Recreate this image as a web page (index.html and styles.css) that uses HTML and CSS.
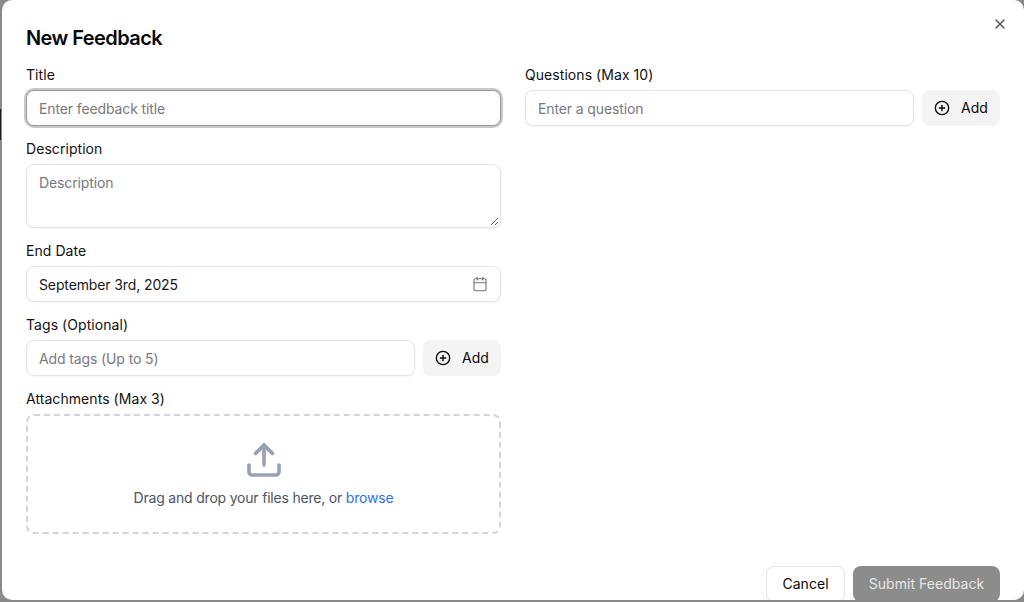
FILE: index.html
```html
<!DOCTYPE html>
<html lang="en">
<head>
<meta charset="utf-8">
<title>New Feedback</title>
<link rel="stylesheet" href="styles.css">
</head>
<body>
<div class="backdrop-mark"></div>
<div class="modal">
  <button class="close" type="button" aria-label="Close">
    <svg width="16" height="16" viewBox="0 0 24 24" fill="none" stroke="currentColor" stroke-width="2" stroke-linecap="round" stroke-linejoin="round"><path d="M18 6 6 18"/><path d="m6 6 12 12"/></svg>
  </button>
  <h2 class="heading">New Feedback</h2>
  <div class="columns">
    <div class="col">
      <div class="field">
        <label class="label">Title</label>
        <div class="input focus"><span class="ph">Enter feedback title</span></div>
      </div>
      <div class="field">
        <label class="label">Description</label>
        <div class="input area"><span class="ph">Description</span>
          <svg class="grip" width="9" height="9" viewBox="0 0 9 9" fill="none" stroke="#555" stroke-width="0.9"><path d="M1 8 8 1"/><path d="M5 8 8 5"/></svg>
        </div>
      </div>
      <div class="field">
        <label class="label">End Date</label>
        <div class="input date"><span class="val">September 3rd, 2025</span>
          <svg width="16" height="16" viewBox="0 0 24 24" fill="none" stroke="#71717a" stroke-width="1.6" stroke-linecap="round" stroke-linejoin="round"><path d="M8 2v4"/><path d="M16 2v4"/><rect x="3" y="4" width="18" height="18" rx="2"/><path d="M3 10h18"/></svg>
        </div>
      </div>
      <div class="field">
        <label class="label">Tags (Optional)</label>
        <div class="row">
          <div class="input grow"><span class="ph">Add tags (Up to 5)</span></div>
          <button class="add" type="button">
            <svg width="16" height="16" viewBox="0 0 24 24" fill="none" stroke="currentColor" stroke-width="2" stroke-linecap="round" stroke-linejoin="round"><circle cx="12" cy="12" r="10"/><path d="M8 12h8"/><path d="M12 8v8"/></svg>
            Add
          </button>
        </div>
      </div>
      <div class="field">
        <label class="label">Attachments (Max 3)</label>
        <div class="drop">
          <svg width="40" height="40" viewBox="0 0 24 24" fill="none" stroke="#98a2b3" stroke-width="2.2" stroke-linecap="round" stroke-linejoin="round"><path d="M21 15v4a2 2 0 0 1-2 2H5a2 2 0 0 1-2-2v-4"/><polyline points="17 8 12 3 7 8"/><line x1="12" y1="3" x2="12" y2="15"/></svg>
          <p class="drop-text">Drag and drop your files here, or <span class="browse">browse</span></p>
        </div>
      </div>
    </div>
    <div class="col">
      <div class="field">
        <label class="label">Questions (Max 10)</label>
        <div class="row">
          <div class="input grow"><span class="ph">Enter a question</span></div>
          <button class="add" type="button">
            <svg width="16" height="16" viewBox="0 0 24 24" fill="none" stroke="currentColor" stroke-width="2" stroke-linecap="round" stroke-linejoin="round"><circle cx="12" cy="12" r="10"/><path d="M8 12h8"/><path d="M12 8v8"/></svg>
            Add
          </button>
        </div>
      </div>
    </div>
  </div>
  <div class="footer">
    <button class="btn cancel" type="button">Cancel</button>
    <button class="btn submit" type="button">Submit Feedback</button>
  </div>
</div>
</body>
</html>
```
FILE: styles.css
```css
* { box-sizing: border-box; }
html, body { margin: 0; height: 100%; }
body {
  background: #8a8a8a;
  font-family: Inter, "Liberation Sans", sans-serif;
  color: #09090b;
  overflow: hidden;
  padding-left: 2px;
}
.backdrop-mark {
  position: absolute;
  left: 0;
  top: 109px;
  width: 1px;
  height: 31px;
  background: #1c1c1c;
}
.modal {
  position: relative;
  background: #fff;
  width: 1022px;
  height: 600px;
  border-radius: 10px;
  padding: 28px 24px 0;
  overflow: hidden;
}
.close {
  position: absolute;
  top: 16px;
  right: 16px;
  padding: 0;
  border: 0;
  background: none;
  color: #52525b;
  display: flex;
}
.heading {
  margin: 0 0 17px;
  font-size: 20px;
  line-height: 20px;
  font-weight: 600;
  letter-spacing: -0.57px;
}
.columns {
  display: grid;
  grid-template-columns: 1fr 1fr;
  gap: 24px;
}
.col { display: flex; flex-direction: column; gap: 13px; min-width: 0; }
.field { display: flex; flex-direction: column; gap: 5px; }
.label { font-size: 14px; line-height: 20px; font-weight: 400; height: 20px; letter-spacing: 0.06px; color: #111113; }
.input {
  height: 36px;
  border: 1px solid #e4e4e7;
  border-radius: 8px;
  background: #fff;
  padding: 0 12px;
  display: flex;
  align-items: center;
  font-size: 14px;
  letter-spacing: -0.12px;
  box-shadow: 0 1px 2px rgba(0,0,0,.05);
}
.input.focus {
  border-color: #9a9a9a;
  box-shadow: 0 0 0 2px #c8c8c8;
}
.ph { color: #787880; }
.val { color: #18181b; }
.area { height: 64px; align-items: flex-start; padding-top: 8px; position: relative; line-height: 20px; }
.grip { position: absolute; right: 1px; bottom: 1px; }
.date { justify-content: space-between; }
.row { display: flex; gap: 8px; }
.grow { flex: 1; min-width: 0; }
.add {
  height: 36px;
  width: 78px;
  border: 0;
  border-radius: 8px;
  background: #f4f4f5;
  color: #09090b;
  font: 400 14px/20px Inter, "Liberation Sans", sans-serif;
  letter-spacing: 0.1px;
  display: flex;
  align-items: center;
  justify-content: space-between;
  padding: 0 12px;
}
.drop {
  height: 120px;
  border: 2px dashed #d1d5db;
  border-radius: 8px;
  display: flex;
  flex-direction: column;
  align-items: center;
  padding-top: 24px;
}
.drop-text { margin: 8px 0 0; font-size: 14px; line-height: 20px; color: #4b5563; letter-spacing: -0.2px; }
.browse { color: #2f6fed; }
.footer {
  position: absolute;
  right: 24px;
  bottom: -2px;
  display: flex;
  gap: 8px;
}
.btn {
  height: 36px;
  border-radius: 8px;
  font: 400 14px/20px Inter, "Liberation Sans", sans-serif;
  letter-spacing: 0.05px;
  padding: 0;
}
.cancel { width: 79px; background: #fff; border: 1px solid #e4e4e7; color: #09090b; }
.submit { width: 147px; background: #8c8c8c; border: 0; color: #e6e6e6; }
```
